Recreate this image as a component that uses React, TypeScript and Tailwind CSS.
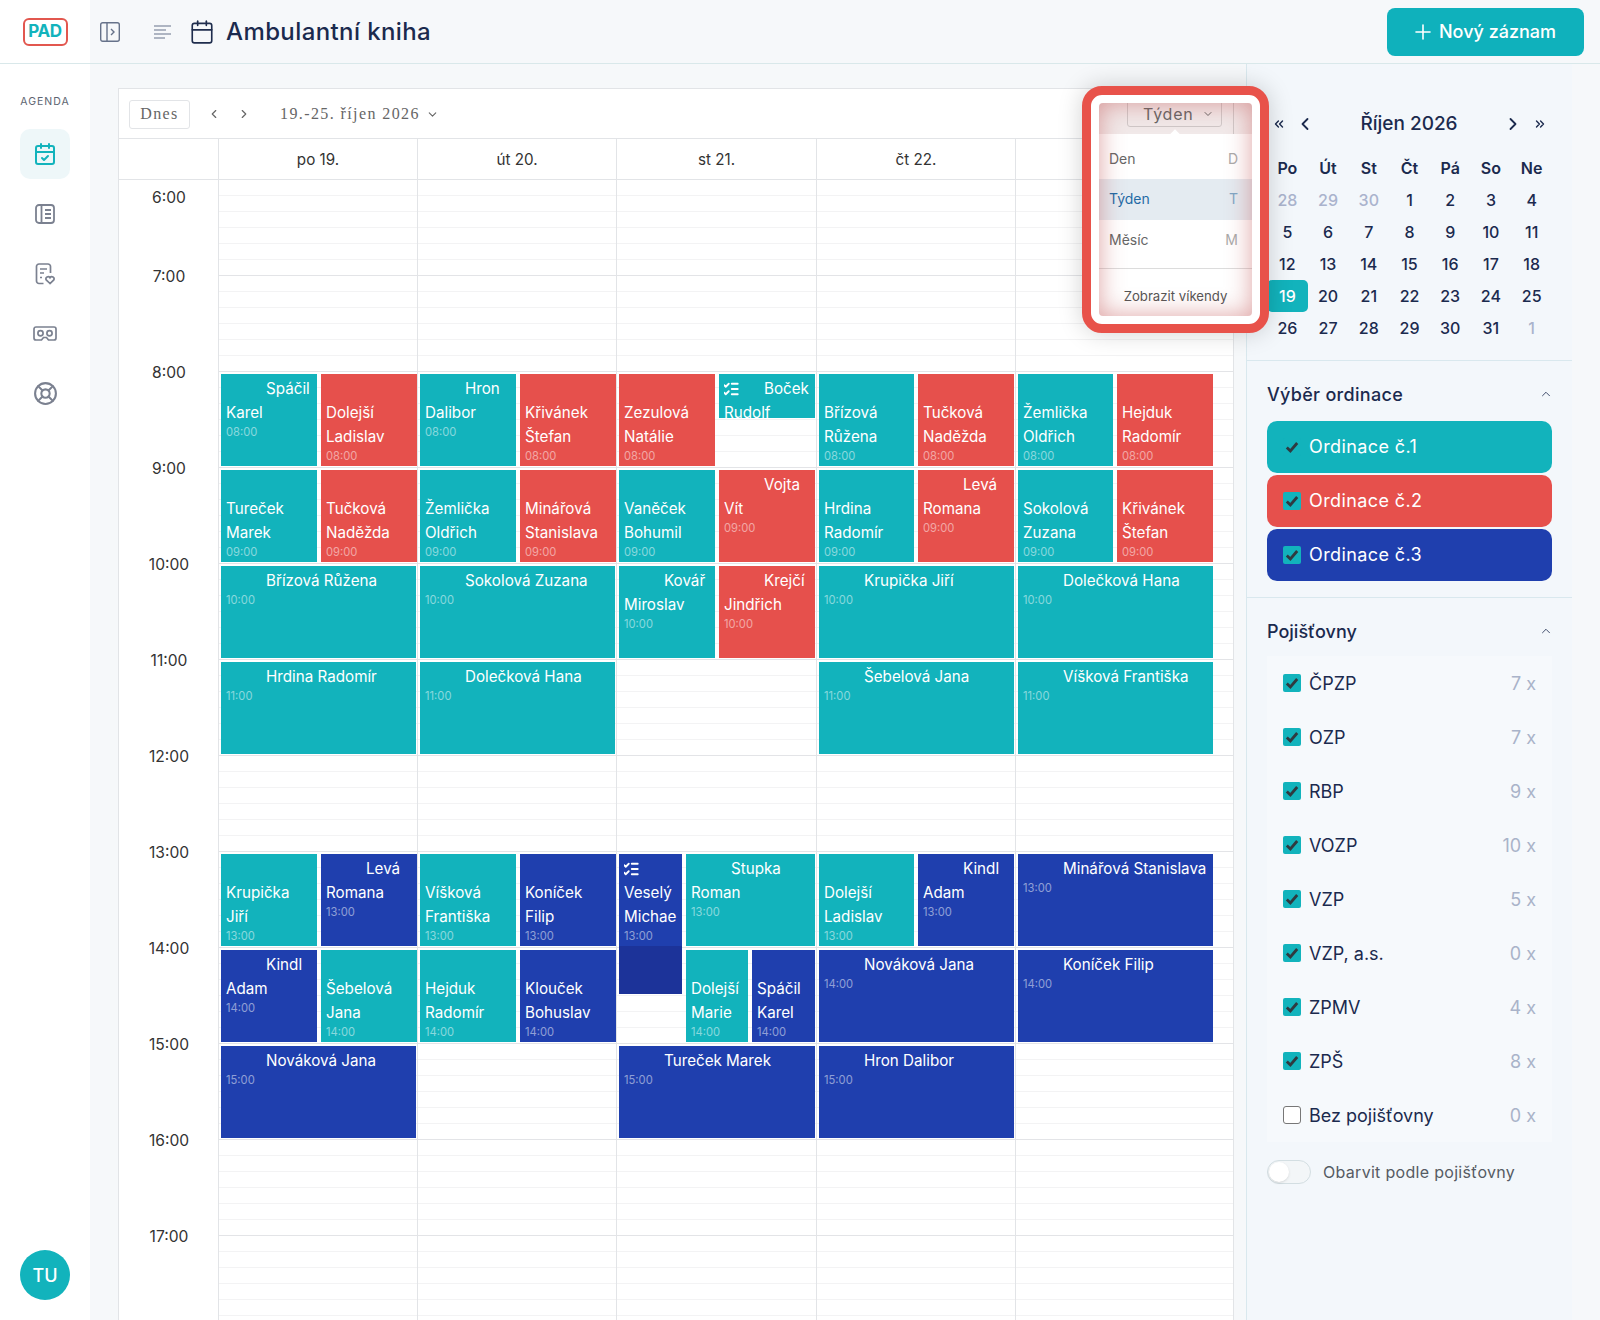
import { Calendar, CalendarCheck, ChevronDown, ChevronLeft, ChevronRight, ChevronUp, ChevronsLeft, ChevronsRight, LifeBuoy, ListChecks, Plus } from 'lucide-react';

const sans = 'font-["Inter",sans-serif]';

type Tone = 'teal' | 'red' | 'blue';

interface Appointment {
  name: string;
  hour: number;
  tone: Tone;
  slot?: 'full' | 'a' | 'b';
  left?: number;
  width?: number;
  height?: number;
  tasks?: boolean;
}

const toneClass: Record<Tone, string> = {
  teal: 'bg-[#12b3bc]',
  red: 'bg-[#e6504c]',
  blue: 'bg-[#1f3fae]',
};

const days: { label: string; offset: number; second: number; full: number; items: Appointment[] }[] = [
  {
    label: 'po 19.',
    offset: 2,
    second: 102,
    full: 195,
    items: [
      { name: 'Spáčil Karel', hour: 8, tone: 'teal', slot: 'a' },
      { name: 'Dolejší Ladislav', hour: 8, tone: 'red', slot: 'b' },
      { name: 'Tureček Marek', hour: 9, tone: 'teal', slot: 'a' },
      { name: 'Tučková Naděžda', hour: 9, tone: 'red', slot: 'b' },
      { name: 'Břízová Růžena', hour: 10, tone: 'teal' },
      { name: 'Hrdina Radomír', hour: 11, tone: 'teal' },
      { name: 'Krupička Jiří', hour: 13, tone: 'teal', slot: 'a' },
      { name: 'Levá Romana', hour: 13, tone: 'blue', slot: 'b' },
      { name: 'Kindl Adam', hour: 14, tone: 'blue', slot: 'a' },
      { name: 'Šebelová Jana', hour: 14, tone: 'teal', slot: 'b' },
      { name: 'Nováková Jana', hour: 15, tone: 'blue' },
    ],
  },
  {
    label: 'út 20.',
    offset: 2,
    second: 102,
    full: 195,
    items: [
      { name: 'Hron Dalibor', hour: 8, tone: 'teal', slot: 'a' },
      { name: 'Křivánek Štefan', hour: 8, tone: 'red', slot: 'b' },
      { name: 'Žemlička Oldřich', hour: 9, tone: 'teal', slot: 'a' },
      { name: 'Minářová Stanislava', hour: 9, tone: 'red', slot: 'b' },
      { name: 'Sokolová Zuzana', hour: 10, tone: 'teal' },
      { name: 'Dolečková Hana', hour: 11, tone: 'teal' },
      { name: 'Víšková Františka', hour: 13, tone: 'teal', slot: 'a' },
      { name: 'Koníček Filip', hour: 13, tone: 'blue', slot: 'b' },
      { name: 'Hejduk Radomír', hour: 14, tone: 'teal', slot: 'a' },
      { name: 'Klouček Bohuslav', hour: 14, tone: 'blue', slot: 'b' },
    ],
  },
  {
    label: 'st 21.',
    offset: 2,
    second: 102,
    full: 196,
    items: [
      { name: 'Zezulová Natálie', hour: 8, tone: 'red', slot: 'a' },
      { name: 'Boček Rudolf', hour: 8, tone: 'teal', slot: 'b', height: 44, tasks: true },
      { name: 'Vaněček Bohumil', hour: 9, tone: 'teal', slot: 'a' },
      { name: 'Vojta Vít', hour: 9, tone: 'red', slot: 'b' },
      { name: 'Kovář Miroslav', hour: 10, tone: 'teal', slot: 'a' },
      { name: 'Krejčí Jindřich', hour: 10, tone: 'red', slot: 'b' },
      { name: 'Veselý Michael', hour: 13, tone: 'blue', left: 2, width: 63, height: 140, tasks: true },
      { name: 'Stupka Roman', hour: 13, tone: 'teal', left: 69, width: 129 },
      { name: 'Dolejší Marie', hour: 14, tone: 'teal', left: 69, width: 62 },
      { name: 'Spáčil Karel', hour: 14, tone: 'blue', left: 135, width: 63 },
      { name: 'Tureček Marek', hour: 15, tone: 'blue' },
    ],
  },
  {
    label: 'čt 22.',
    offset: 2,
    second: 101,
    full: 195,
    items: [
      { name: 'Břízová Růžena', hour: 8, tone: 'teal', slot: 'a' },
      { name: 'Tučková Naděžda', hour: 8, tone: 'red', slot: 'b' },
      { name: 'Hrdina Radomír', hour: 9, tone: 'teal', slot: 'a' },
      { name: 'Levá Romana', hour: 9, tone: 'red', slot: 'b' },
      { name: 'Krupička Jiří', hour: 10, tone: 'teal' },
      { name: 'Šebelová Jana', hour: 11, tone: 'teal' },
      { name: 'Dolejší Ladislav', hour: 13, tone: 'teal', slot: 'a' },
      { name: 'Kindl Adam', hour: 13, tone: 'blue', slot: 'b' },
      { name: 'Nováková Jana', hour: 14, tone: 'blue' },
      { name: 'Hron Dalibor', hour: 15, tone: 'blue' },
    ],
  },
  {
    label: 'pá 23.',
    offset: 2,
    second: 101,
    full: 195,
    items: [
      { name: 'Žemlička Oldřich', hour: 8, tone: 'teal', slot: 'a' },
      { name: 'Hejduk Radomír', hour: 8, tone: 'red', slot: 'b' },
      { name: 'Sokolová Zuzana', hour: 9, tone: 'teal', slot: 'a' },
      { name: 'Křivánek Štefan', hour: 9, tone: 'red', slot: 'b' },
      { name: 'Dolečková Hana', hour: 10, tone: 'teal' },
      { name: 'Víšková Františka', hour: 11, tone: 'teal' },
      { name: 'Minářová Stanislava', hour: 13, tone: 'blue' },
      { name: 'Koníček Filip', hour: 14, tone: 'blue' },
    ],
  },
];

const hours = [6, 7, 8, 9, 10, 11, 12, 13, 14, 15, 16, 17];
const slots = Array.from({ length: 72 }, (_, i) => i);

const monthRows = [
  [28, 29, 30, 1, 2, 3, 4],
  [5, 6, 7, 8, 9, 10, 11],
  [12, 13, 14, 15, 16, 17, 18],
  [19, 20, 21, 22, 23, 24, 25],
  [26, 27, 28, 29, 30, 31, 1],
];

const insurers = [
  { name: 'ČPZP', count: 7, on: true },
  { name: 'OZP', count: 7, on: true },
  { name: 'RBP', count: 9, on: true },
  { name: 'VOZP', count: 10, on: true },
  { name: 'VZP', count: 5, on: true },
  { name: 'VZP, a.s.', count: 0, on: true },
  { name: 'ZPMV', count: 4, on: true },
  { name: 'ZPŠ', count: 8, on: true },
  { name: 'Bez pojišťovny', count: 0, on: false },
];

function CheckBox({ on = true }: { on?: boolean }) {
  if (!on) return <span className="w-[18px] h-[18px] rounded-[3px] border border-[#777] bg-white shrink-0" />;
  return (
    <span className="w-[18px] h-[18px] rounded-[2px] bg-[#12b3bc] shrink-0 flex items-center justify-center">
      <svg width="14" height="14" viewBox="0 0 14 14" fill="none" stroke="#2f3a40" strokeWidth="2.8">
        <path d="M1.8 7.4 5.4 11 12.2 3" />
      </svg>
    </span>
  );
}

function AppointmentCard({ item, offset, second, full }: { item: Appointment; offset: number; second: number; full: number }) {
  const left = item.left ?? (item.slot === 'b' ? second : offset);
  const width = item.width ?? (item.slot === 'a' ? second - offset - 4 : item.slot === 'b' ? 96 : full);
  const top = (item.hour - 6) * 96 + 2;

  return (
    <div
      className={`absolute overflow-hidden text-white ${toneClass[item.tone]}`}
      style={{ left, width, top, height: item.height ?? 92 }}
    >
      {item.height === 140 && <div className="absolute left-0 right-0 top-[92px] bottom-0 bg-[#1c3399]" />}
      <div className="relative mx-[5px] mt-[3px] overflow-hidden text-[15.2px] leading-6">
        <div className="float-left w-[40px] h-6 flex items-center">
          {item.tasks && <ListChecks className="w-[18px] h-[18px] -ml-[2px]" strokeWidth={2.4} />}
        </div>
        <div>{item.name}</div>
        <div className="relative -top-[1px] text-[11.2px] leading-4 text-white/50">{String(item.hour).padStart(2, '0')}:00</div>
      </div>
    </div>
  );
}

export default function App() {
  return (
    <div className={`w-[1600px] h-[1320px] overflow-hidden bg-[#f6f8fa] flex flex-col ${sans}`}>
      <header className="h-[64px] shrink-0 flex items-center border-b border-[#d9e8ea]">
        <div className="w-[90px] h-full bg-white flex items-center justify-center">
          <span className="w-[45px] h-[28px] rounded-[6px] border-[2.5px] border-[#e2574f] flex items-center justify-center text-[17px] font-bold tracking-[-0.3px] text-[#12b3bc]">PAD</span>
        </div>
        <svg className="ml-[10px]" width="20" height="20" viewBox="0 0 20 20" fill="none" stroke="#66728a" strokeWidth="1.4">
          <rect x="0.7" y="0.7" width="18.6" height="18.6" rx="2" />
          <path d="M7 1v18M11 7l3 3-3 3" />
        </svg>
        <svg className="ml-[34px]" width="17" height="16" viewBox="0 0 17 16" fill="none" stroke="#66728a" strokeWidth="1.2">
          <path d="M0 2h17M0 6h12M0 10h17M0 14h11" />
        </svg>
        <Calendar className="ml-[18px] w-[26px] h-[26px] text-[#1f2d4d]" strokeWidth={1.5} />
        <h1 className="ml-[11px] text-[24px] tracking-[0.4px] font-medium text-[#1b2a4e]">Ambulantní kniha</h1>
        <button className="ml-auto mr-[16px] w-[197px] h-[48px] pr-[4px] rounded-[8px] bg-[#0fb1bc] text-white text-[18px] font-medium flex items-center justify-center gap-1">
          <Plus className="w-[24px] h-[24px]" strokeWidth={1.6} />
          Nový záznam
        </button>
      </header>

      <div className="flex-1 flex min-h-0">
        <nav className="w-[90px] bg-white shrink-0 flex flex-col items-center">
          <div className="mt-[30px] text-[10.5px] tracking-[1px] text-[#5d6470]">AGENDA</div>
          <div className="mt-[19px] w-[50px] h-[50px] rounded-[10px] bg-[#eef7f9] flex items-center justify-center text-[#12b3bc]">
            <CalendarCheck className="w-[24px] h-[24px]" strokeWidth={2} />
          </div>
          <div className="mt-[5px] flex flex-col text-[#7b8190]">
            <span className="w-[50px] h-[60px] flex items-center justify-center">
              <svg width="20" height="20" viewBox="0 0 20 20" fill="none" stroke="currentColor" strokeWidth="1.8">
                <rect x="1" y="1" width="18" height="18" rx="3" />
                <path d="M6.5 1v18M10 6h6M10 10h6M10 14h6" />
              </svg>
            </span>
            <span className="w-[50px] h-[60px] flex items-center justify-center">
              <svg width="20" height="22" viewBox="0 0 20 22" fill="none" stroke="currentColor" strokeWidth="1.7">
                <path d="M8.5 20.5H4a2.5 2.5 0 0 1-2.5-2.5V3.5A2.5 2.5 0 0 1 4 1h9a2.5 2.5 0 0 1 2.5 2.5V10M5 6h7M5 10h4M5 14.5h2" />
                <path d="M15 20.5l-3.8-3.6a2.2 2.2 0 0 1 3.8-2.2 2.2 2.2 0 0 1 3.8 2.2z" />
              </svg>
            </span>
            <span className="w-[50px] h-[60px] flex items-center justify-center">
              <svg width="24" height="15" viewBox="0 0 24 15" fill="none" stroke="currentColor" strokeWidth="1.7">
                <path d="M3 1h18a2 2 0 0 1 2 2v9a2 2 0 0 1-2 2h-5.5l-2-2.5h-3L8.500 14H3a2 2 0 0 1-2-2V3a2 2 0 0 1 2-2z" />
                <circle cx="7.500" cy="7.200" r="2.600" />
                <circle cx="16.500" cy="7.200" r="2.600" />
              </svg>
            </span>
            <span className="w-[50px] h-[60px] flex items-center justify-center">
              <LifeBuoy className="w-[25px] h-[25px]" strokeWidth={2} />
            </span>
          </div>
          <div className="mt-auto mb-[20px] w-[50px] h-[50px] rounded-full bg-[#12b3bc] text-white text-[18px] font-medium flex items-center justify-center">TU</div>
        </nav>

        <main className="flex-1 min-w-0 relative flex">
          <section className="ml-[28px] mt-[24px] w-[1116px] border-l border-t border-r border-[#e2e4e7] bg-white flex flex-col">
            <div className="h-[50px] shrink-0 flex items-center pt-[1px] border-b border-[#e2e4e7] font-['Liberation_Serif',serif] text-[16px] tracking-[1.4px] text-[#666]">
              <span className="ml-[10px] w-[61px] h-[29px] rounded-[3px] border border-[#e2e4e7] flex items-center justify-center">Dnes</span>
              <ChevronLeft className="ml-[17px] w-[14px] h-[14px]" />
              <ChevronRight className="ml-[16px] w-[14px] h-[14px]" />
              <span className="ml-[29px]">19.-25. říjen 2026</span>
              <ChevronDown className="ml-[6px] w-[13px] h-[13px]" />
            </div>

            <div className="h-[41px] pt-[2px] shrink-0 grid grid-cols-[99px_199px_199px_200px_199px_218px] border-b border-[#e2e4e7] text-[15.2px] text-[#333]">
              <div />
              {days.map((day) => (
                <div key={day.label} className="-mt-[2px] pt-[2px] border-l border-[#e2e4e7] flex items-center justify-center">{day.label}</div>
              ))}
            </div>

            <div className="flex-1 overflow-hidden grid grid-cols-[99px_199px_199px_200px_199px_218px]">
              <div className="flex flex-col items-center pl-[1px] pt-[6px] text-[15.6px] leading-6 text-[#333]">
                {hours.map((hour, i) => (
                  <div key={hour} className={i === 0 ? 'mb-[55px]' : 'mb-[72px]'}>{hour}:00</div>
                ))}
              </div>
              {days.map((day) => (
                <div key={day.label} className="relative border-l border-[#e2e4e7]">
                  {slots.map((slot) => (
                    <div key={slot} className={`h-[16px] border-b ${slot % 6 === 5 ? 'border-[#e3e4e7]' : 'border-[#f3f3f4]'}`} />
                  ))}
                  {day.items.map((item) => (
                    <AppointmentCard key={`${item.name}-${item.hour}`} item={item} offset={day.offset} second={day.second} full={day.full} />
                  ))}
                </div>
              ))}
            </div>
          </section>

          <aside className="ml-[12px] w-[326px] border-l border-[#d9e8ee] bg-[#f3f7fb] flex flex-col text-[#1b2a4e]">
            <div className="h-[297px] shrink-0 border-b border-[#d9e8ee] pl-[20px] pt-[46px]">
              <div className="h-[28px] w-[285px] flex items-center text-[#1b2a4e]">
                <ChevronsLeft className="ml-[5px] w-[14px] h-[14px]" strokeWidth={2.4} />
                <ChevronLeft className="ml-[9px] w-[20px] h-[20px]" strokeWidth={2.2} />
                <span className="ml-auto mr-auto text-[19px] font-medium">Říjen 2026</span>
                <ChevronRight className="w-[20px] h-[20px]" strokeWidth={2.2} />
                <ChevronsRight className="ml-[10px] mr-[5px] w-[14px] h-[14px]" strokeWidth={2.4} />
              </div>
              <div className="mt-[14px] w-[285px] grid grid-cols-7 text-[16px] font-medium text-center">
                {['Po', 'Út', 'St', 'Čt', 'Pá', 'So', 'Ne'].map((d) => (
                  <div key={d} className="h-[32px] leading-[32px] font-semibold">{d}</div>
                ))}
                {monthRows.map((row, r) =>
                  row.map((d, i) => {
                    const muted = (r === 0 && d > 20) || (r === 4 && d === 1);
                    const today = r === 3 && i === 0;
                    return (
                      <div
                        key={`${r}-${i}`}
                        className={`h-[32px] leading-[32px] ${muted ? 'text-[#aab3cd]' : ''} ${today ? 'bg-[#12b3bc] text-white rounded-[5px]' : ''}`}
                      >
                        {d}
                      </div>
                    );
                  }),
                )}
              </div>
            </div>

            <div className="h-[237px] shrink-0 border-b border-[#d9e8ee] pl-[20px] pr-[20px] pt-[18px]">
              <div className="flex items-center justify-between h-[30px]">
                <h2 className="text-[18px] tracking-[0.3px] font-medium">Výběr ordinace</h2>
                <ChevronUp className="w-[14px] h-[14px] mr-[-1px]" strokeWidth={1.4} />
              </div>
              <div className="mt-[12px] flex flex-col gap-[2px] text-white text-[18px] tracking-[0.4px]">
                {[
                  { name: 'Ordinace č.1', bg: 'bg-[#12b3bc]' },
                  { name: 'Ordinace č.2', bg: 'bg-[#e6504c]' },
                  { name: 'Ordinace č.3', bg: 'bg-[#1f3fae]' },
                ].map((o) => (
                  <div key={o.name} className={`h-[52px] rounded-[10px] ${o.bg} flex items-center pl-[16px] gap-[8px]`}>
                    <CheckBox />
                    <span className="-mt-[2px]">{o.name}</span>
                  </div>
                ))}
              </div>
            </div>

            <div className="pl-[20px] pr-[20px] pt-[18px]">
              <div className="flex items-center justify-between h-[30px]">
                <h2 className="text-[18px] font-medium">Pojišťovny</h2>
                <ChevronUp className="w-[14px] h-[14px] mr-[-1px]" strokeWidth={1.4} />
              </div>
              <div className="mt-[10px] flex flex-col">
                {insurers.map((p) => (
                  <div key={p.name} className="h-[54px] flex items-center pl-[16px] pr-[16px] gap-[8px] text-[18px] bg-[#f6f9fc]">
                    <CheckBox on={p.on} />
                    <span>{p.name}</span>
                    <span className="ml-auto text-[#a9b3c9]">{p.count} x</span>
                  </div>
                ))}
              </div>
              <div className="mt-[18px] flex items-center gap-[12px]">
                <span className="w-[44px] h-[24px] rounded-full border border-[#d3dee2] bg-[#f3f6f8] flex items-center">
                  <span className="ml-[1px] w-[20px] h-[20px] rounded-full bg-white shadow-sm" />
                </span>
                <span className="text-[16px] tracking-[0.3px] text-[#565b63]">Obarvit podle pojišťovny</span>
              </div>
            </div>
          </aside>

          {/* Zvýrazněný výběr zobrazení */}
          <div className="absolute left-[992px] top-[22px] w-[187px] h-[247px] rounded-[20px] border-[9px] border-[#e8524a] bg-white p-[8px] shadow-[0_0_24px_rgba(0,0,0,0.18)]">
            <div className="relative h-full rounded-[4px] overflow-hidden bg-white text-[14px]">
              <div className="h-[31px] bg-[#f1e9e9] flex justify-start relative">
                <span className="ml-[28px] mt-[-6px] w-[95px] h-[30px] pt-[4px] pl-[15px] rounded-[3px] border border-[#cfc8c8] flex items-center justify-start gap-[8px] text-[16px] tracking-[0.8px] text-[#666]">
                  Týden
                  <ChevronDown className="w-[12px] h-[12px]" />
                </span>
                <span className="ml-[11px] w-px bg-[#cfc8c8]" />
                <span className="absolute left-[72px] top-[28px] w-[8px] h-[8px] rotate-45 bg-white" />
              </div>
              <div className="h-[45px] pt-[3px] flex items-center justify-between pl-[10px] pr-[14px] text-[#666]">
                <span>Den</span>
                <span className="text-[#aaa]">D</span>
              </div>
              <div className="h-[41px] pb-[2px] flex items-center justify-between pl-[10px] pr-[14px] bg-[#e4ebf1] text-[#1f6aa5]">
                <span>Týden</span>
                <span className="text-[#7fa6c4]">T</span>
              </div>
              <div className="h-[41px] pb-[2px] flex items-center justify-between pl-[10px] pr-[14px] text-[#666]">
                <span>Měsíc</span>
                <span className="text-[#aaa]">M</span>
              </div>
              <div className="mt-[7px] border-t border-[#dcdcdc] h-[48px] pt-[9px] flex items-center justify-center text-[13.2px] text-[#555]">Zobrazit víkendy</div>
              <div className="absolute inset-0 pointer-events-none shadow-[inset_0_0_24px_rgba(190,70,70,0.5)]" />
            </div>
          </div>
        </main>
      </div>
    </div>
  );
}
